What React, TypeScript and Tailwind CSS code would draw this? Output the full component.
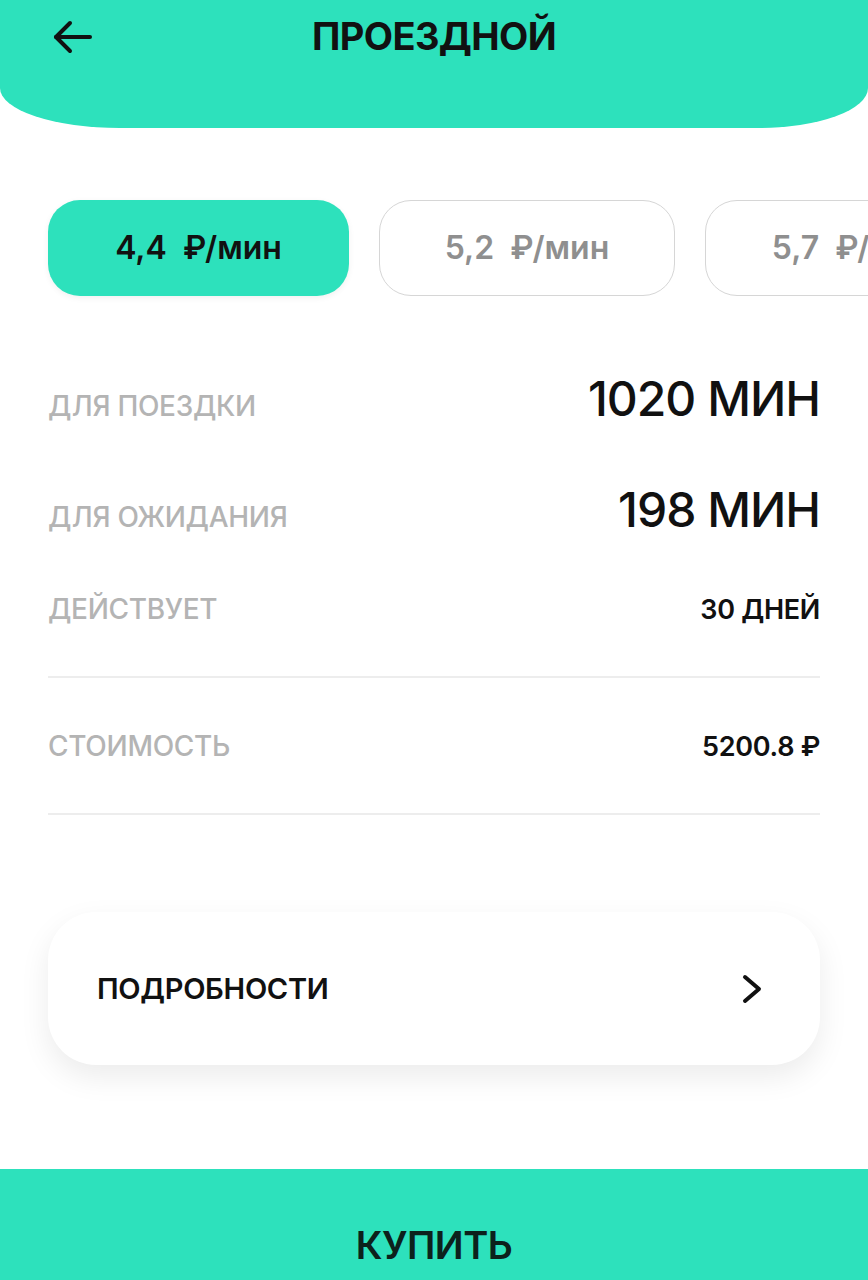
import * as React from 'react';

const font = { fontFamily: 'Inter, "Noto Sans", sans-serif' };

interface Tariff {
  price: string;
}

const tariffs: Tariff[] = [{ price: '4,4' }, { price: '5,2' }, { price: '5,7' }];

// строка с подписью слева и значением справа
const InfoRow: React.FC<{ label: string; value: string; big?: boolean; className?: string }> = ({
  label,
  value,
  big,
  className,
}) => (
  <div className={`flex items-baseline justify-between ${className ?? ''}`}>
    <span className="text-[28px] font-medium leading-none tracking-[-0.3px] text-[#b4b4b4]">{label}</span>
    <span
      className={
        big
          ? 'text-[48px] font-medium leading-none tracking-[-1px] text-[#111]'
          : 'text-[27px] font-semibold leading-none tracking-[-0.3px] text-[#111]'
      }
    >
      {value}
    </span>
  </div>
);

export default function App() {
  const [active, setActive] = React.useState(0);

  return (
    <div className="relative flex h-[1280px] w-[868px] flex-col overflow-hidden bg-white" style={font}>
      {/* шапка */}
      <header className="relative flex h-[128px] shrink-0 items-start justify-center rounded-bl-[120px_40px] rounded-br-[110px_40px] bg-[#2de1bc]">
        <button className="absolute left-[52px] top-[20px] flex h-[34px] w-[40px] items-center justify-center">
          <svg width="40" height="34" viewBox="0 0 40 34" fill="none" stroke="#111" strokeWidth="4" strokeLinecap="round" strokeLinejoin="round">
            <path d="M38 17H4" />
            <path d="M18 3L4 17l14 14" />
          </svg>
        </button>
        <h1 className="mt-[15px] text-[38px] font-bold leading-[42px] tracking-[-0.6px] text-[#111]">ПРОЕЗДНОЙ</h1>
      </header>

      {/* тарифы */}
      <div className="mt-[72px] flex shrink-0 gap-[30px] pl-[48px]">
        {tariffs.map((t, i) => (
          <button
            key={t.price}
            onClick={() => setActive(i)}
            className={
              i === active
                ? 'flex h-[96px] w-[301px] shrink-0 items-center justify-center rounded-[32px] bg-[#2de1bc] text-[32px] font-semibold text-[#111] shadow-[0_2px_6px_rgba(0,0,0,0.06)]'
                : 'flex h-[96px] w-[296px] shrink-0 items-center justify-center rounded-[32px] border-[1.5px] border-[#d6d6d6] bg-white text-[32px] font-semibold text-[#8f8f8f]'
            }
          >
            {t.price}&nbsp;&nbsp;₽/мин
          </button>
        ))}
      </div>

      {/* детали */}
      <div className="flex flex-col px-[48px]">
        <InfoRow className="mt-[79px]" label="ДЛЯ ПОЕЗДКИ" value="1020 МИН" big />
        <InfoRow className="mt-[63px]" label="ДЛЯ ОЖИДАНИЯ" value="198 МИН" big />
        <InfoRow className="mt-[61px]" label="ДЕЙСТВУЕТ" value="30 ДНЕЙ" />
        <div className="mt-[53px] h-[2px] bg-[#ededed]" />
        <InfoRow className="mt-[54px]" label="СТОИМОСТЬ" value="5200.8 ₽" />
        <div className="mt-[53px] h-[2px] bg-[#ededed]" />

        <button className="mt-[97px] flex h-[153px] items-center justify-between rounded-[48px] bg-white pl-[49px] pr-[58px] shadow-[0_12px_30px_rgba(0,0,0,0.08)]">
          <span className="text-[29px] font-semibold tracking-[-0.3px] text-[#111]">ПОДРОБНОСТИ</span>
          <svg width="22" height="30" viewBox="0 0 22 30" fill="none" stroke="#111" strokeWidth="4" strokeLinecap="round" strokeLinejoin="round">
            <path d="M5 3l14 12L5 27" />
          </svg>
        </button>
      </div>

      {/* купить */}
      <button className="mt-auto flex h-[111px] shrink-0 items-end justify-center bg-[#2de1bc] pb-[11px]">
        <span className="text-[38px] font-semibold leading-[48px] tracking-[-0.5px] text-[#0c211c]">КУПИТЬ</span>
      </button>
    </div>
  );
}
